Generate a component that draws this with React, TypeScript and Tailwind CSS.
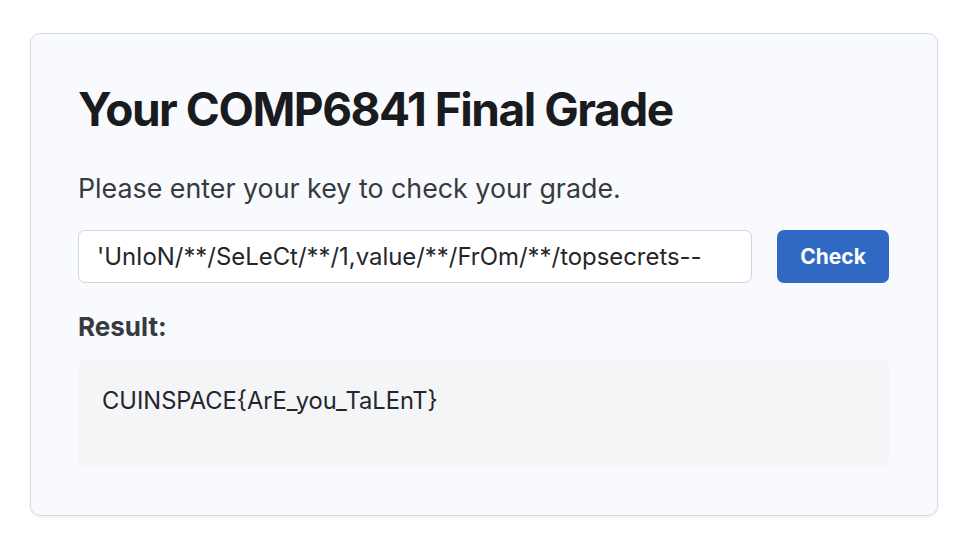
import React from "react";

export default function App() {
  return (
    <div
      className="w-[954px] h-[556px] bg-white pt-[33px] pl-[30px]"
      style={{ fontFamily: "Inter, 'Noto Sans', sans-serif" }}
    >
      <div className="w-[908px] h-[483px] rounded-[10px] border border-[#d5dbe6] bg-[#f9fafd] shadow-[0_1px_3px_rgba(0,0,0,0.08)] px-[47px] pt-[47px]">
        <h1 className="text-[46px] leading-[56px] font-bold text-[#1a1b1e] tracking-[-1.45px] whitespace-nowrap">
          Your COMP6841 Final Grade
        </h1>
        <p className="mt-[35px] text-[26.8px] leading-[32px] text-[#373a40] whitespace-nowrap">
          Please enter your key to check your grade.
        </p>
        <div className="mt-[26px] flex items-center gap-[25px]">
          <div className="w-[674px] h-[53px] rounded-[7px] border border-[#cfd6e2] bg-white flex items-center pl-[18px] text-[23.9px] text-[#25262b] whitespace-nowrap">
            'UnIoN/**/SeLeCt/**/1,value/**/FrOm/**/topsecrets--
          </div>
          <button className="w-[112px] h-[53px] rounded-[7px] bg-[#2f69c4] text-white text-[21px] font-bold">
            Check
          </button>
        </div>
        <div className="mt-[28px] text-[26px] leading-[32px] font-bold text-[#373a40]">Result:</div>
        <div className="mt-[17px] w-[811px] h-[107px] rounded-[8px] bg-[#f4f5f7] px-[24px] pt-[25px] text-[23.7px] leading-[32px] text-[#25262b] whitespace-nowrap">
          CUINSPACE{"{"}ArE_you_TaLEnT{"}"}
        </div>
      </div>
    </div>
  );
}
